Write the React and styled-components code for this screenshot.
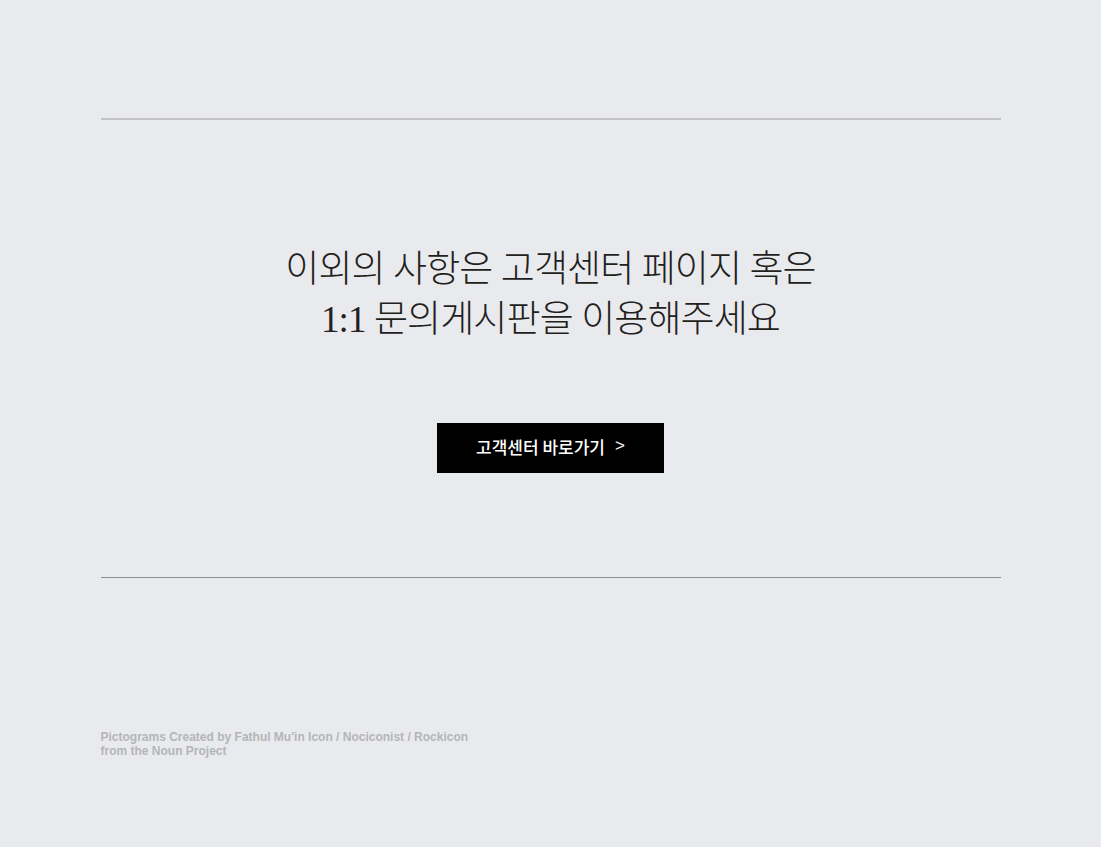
import styled, { createGlobalStyle } from "styled-components";

const GlobalStyle = createGlobalStyle`
  html, body {
    margin: 0;
    padding: 0;
    background-color: #e9eaee;
  }
  body {
    font-family: "Noto Sans CJK KR", "Liberation Sans", sans-serif;
  }
`;

const App = () => {
  return (
    <>
      <GlobalStyle />
      <Page>
        <Section>
          <Title>
            이외의 사항은 고객센터 페이지 혹은
            <br />
            1:1 문의게시판을 이용해주세요
          </Title>
          <LinkBtn>
            고객센터 바로가기 <Arrow>&gt;</Arrow>
          </LinkBtn>
        </Section>
        <Credit>
          Pictograms Created by Fathul Mu'in Icon / Nociconist / Rockicon
          <br />
          from the Noun Project
        </Credit>
      </Page>
    </>
  );
};

const Page = styled.div`
  width: 900px;
  margin: 0 auto;
  padding-top: 118px;
  padding-bottom: 80px;
`;

const Section = styled.section`
  display: flex;
  flex-direction: column;
  align-items: center;
  border-top: 2px solid #c2c2c5;
  border-bottom: 1px solid #8e8e90;
  padding: 125px 0 104px;
`;

const Title = styled.h2`
  margin: 0;
  font-family: "Liberation Serif", "Noto Sans CJK KR", serif;
  font-size: 37px;
  font-weight: 300;
  line-height: 50px;
  letter-spacing: -0.9px;
  color: #231f20;
  text-align: center;
`;

const LinkBtn = styled.a`
  display: flex;
  align-items: center;
  justify-content: center;
  box-sizing: border-box;
  margin-top: 78px;
  padding-bottom: 4px;
  width: 227px;
  height: 50px;
  background-color: #000;
  color: #fff;
  font-family: "Noto Sans CJK KR", sans-serif;
  font-size: 17px;
  font-weight: 500;
  text-decoration: none;
  cursor: pointer;
`;

const Arrow = styled.span`
  margin-left: 10px;
  font-family: "Liberation Sans", sans-serif;
`;

const Credit = styled.p`
  margin: 152px 0 0;
  font-family: "Liberation Sans", Arial, sans-serif;
  font-size: 12px;
  font-weight: bold;
  line-height: 14px;
  color: #b4b5b8;
`;

export default App;
